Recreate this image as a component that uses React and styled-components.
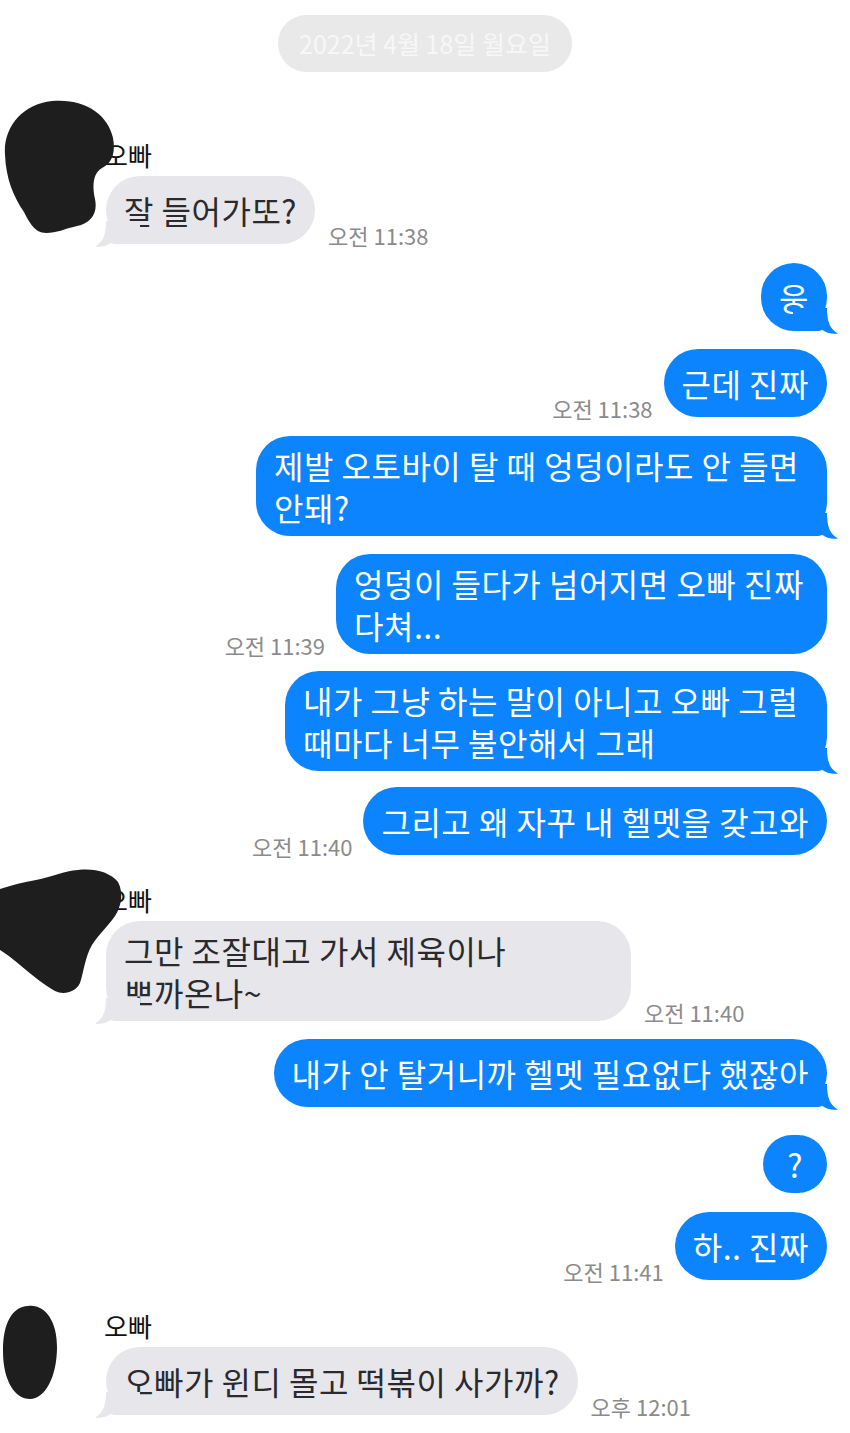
import React from "react";
import styled, { createGlobalStyle } from "styled-components";

const GlobalStyle = createGlobalStyle`
  html, body { margin: 0; padding: 0; background: #ffffff; }
  body { font-family: "Noto Sans CJK KR", "Noto Sans", sans-serif; }
`;

const BLUE = "#0b84fe";
const GRAY = "#e6e6eb";

const Page = styled.div`
  width: 850px;
  min-height: 1433px;
  box-sizing: border-box;
  padding-top: 15px;
  display: flex;
  flex-direction: column;
  background: #ffffff;
  overflow: hidden;
`;

const DatePill = styled.div`
  align-self: center;
  height: 57px;
  padding: 0 21px;
  border-radius: 29px;
  background: #e9e9e9;
  color: #f7f7f7;
  font-size: 25px;
  display: flex;
  align-items: center;
  line-height: 1;
`;

const Group = styled.div`
  position: relative;
  display: flex;
  flex-direction: column;
  margin-top: ${(p) => p.$mt}px;
`;

const Name = styled.div`
  margin-left: 104px;
  margin-bottom: 6px;
  font-size: 26px;
  line-height: 30px;
  color: #111111;
`;

const Blob = styled.svg`
  position: absolute;
  left: 0;
  top: ${(p) => p.$top}px;
  z-index: 2;
  fill: #1e1e1e;
`;

const Row = styled.div`
  display: flex;
  align-items: flex-end;
  justify-content: ${(p) => (p.$out ? "flex-end" : "flex-start")};
  gap: ${(p) => (p.$out ? 11 : 13)}px;
  margin-top: ${(p) => p.$mt}px;
  padding: ${(p) => (p.$out ? "0 23px 0 0" : "0 0 0 106px")};
`;

const Bubble = styled.div`
  position: relative;
  box-sizing: border-box;
  width: ${(p) => (p.$w ? `${p.$w}px` : "auto")};
  min-height: ${(p) => (p.$compact ? 58 : 68)}px;
  padding: ${(p) => (p.$compact ? "0 24px" : "8px 18px")};
  display: flex;
  flex-direction: column;
  justify-content: center;
  border-radius: 34px;
  background: ${(p) => (p.$out ? BLUE : GRAY)};
  color: ${(p) => (p.$out ? "#ffffff" : "#2a2a2e")};
  font-size: 32px;
  letter-spacing: 0.5px;
  line-height: 42px;
  white-space: nowrap;
`;

const Line = styled.span`
  display: block;
  height: 42px;
`;

const Tail = styled.svg`
  position: absolute;
  bottom: -3px;
  width: 46px;
  height: 26px;
  fill: ${(p) => (p.$out ? BLUE : GRAY)};
  ${(p) => (p.$out ? "right: -12px;" : "left: -12px; transform: scaleX(-1);")}
`;

const Time = styled.div`
  font-size: 22px;
  line-height: 22px;
  color: #8b8b8b;
  white-space: nowrap;
  margin-bottom: -2px;
`;

const BLOBS = {
  1: {
    top: -40,
    w: 120,
    h: 135,
    d: "M 5 55 C 3 28, 22 4, 52 1 C 84 -2, 108 14, 113 38 C 116 54, 111 64, 102 68 C 93 73, 92 86, 95 99 C 98 113, 91 123, 77 126 C 64 129, 57 133, 46 133 C 35 133, 29 122, 24 112 C 13 96, 6 78, 5 55 Z",
  },
  2: {
    top: -22,
    w: 124,
    h: 134,
    d: "M 0 26 C 12 22, 24 19, 36 17 C 52 14, 64 8, 78 7 C 94 5, 110 9, 118 19 C 124 30, 121 44, 115 53 C 108 63, 99 71, 92 82 C 85 94, 84 108, 80 120 C 75 130, 63 132, 55 128 C 44 122, 32 112, 20 102 C 12 95, 5 90, 0 87 Z",
  },
  3: {
    top: -8,
    w: 60,
    h: 100,
    d: "M 28 3 C 45 1, 57 18, 57 44 C 57 74, 45 96, 30 96 C 15 96, 3 78, 3 48 C 3 20, 12 4, 28 3 Z",
  },
};

const TAIL_PATH =
  "M0 0 H34 C34 14 37 21 45 25.5 C39 26.3 33 25 29.5 22 C27 23 24 23 20 23 H0 Z";

const items = [
  { kind: "in", blob: 1, mt: 68, lines: ["잘 들어가또?"], time: "오전 11:38" },
  { kind: "out", mt: 19, lines: ["웅"], tail: true },
  { kind: "out", mt: 18, lines: ["근데 진짜"], time: "오전 11:38" },
  { kind: "out", mt: 19, lines: ["제발 오토바이 탈 때 엉덩이라도 안 들면", "안돼?"], tail: true, w: 571 },
  { kind: "out", mt: 18, lines: ["엉덩이 들다가 넘어지면 오빠 진짜", "다쳐..."], time: "오전 11:39", w: 491 },
  { kind: "out", mt: 17, lines: ["내가 그냥 하는 말이 아니고 오빠 그럴", "때마다 너무 불안해서 그래"], tail: true, w: 542 },
  { kind: "out", mt: 16, lines: ["그리고 왜 자꾸 내 헬멧을 갖고와"], time: "오전 11:40" },
  { kind: "in", blob: 2, mt: 30, lines: ["그만 조잘대고 가서 제육이나", "뽀까온나~"], time: "오전 11:40", w: 525 },
  { kind: "out", mt: 18, lines: ["내가 안 탈거니까 헬멧 필요없다 했잖아"], tail: true },
  { kind: "out", mt: 28, lines: ["?"], compact: true },
  { kind: "out", mt: 19, lines: ["하.. 진짜"], time: "오전 11:41" },
  { kind: "in", blob: 3, mt: 31, lines: ["오빠가 윈디 몰고 떡볶이 사가까?"], time: "오후 12:01" },
];

function MessageBubble({ item, out }) {
  return (
    <Bubble $out={out} $w={item.w} $compact={item.compact}>
      {item.lines.map((l, i) => (
        <Line key={i}>{l}</Line>
      ))}
      {(item.tail || !out) && (
        <Tail $out={out} viewBox="0 0 46 26">
          <path d={TAIL_PATH} />
        </Tail>
      )}
    </Bubble>
  );
}

function Incoming({ item }) {
  const b = BLOBS[item.blob];
  return (
    <Group $mt={item.mt}>
      <Blob $top={b.top} width={b.w} height={b.h} viewBox={`0 0 ${b.w} ${b.h}`}>
        <path d={b.d} />
      </Blob>
      <Name>오빠</Name>
      <Row $mt={0}>
        <MessageBubble item={item} out={false} />
        {item.time && <Time>{item.time}</Time>}
      </Row>
    </Group>
  );
}

function Outgoing({ item }) {
  return (
    <Row $out $mt={item.mt}>
      {item.time && <Time>{item.time}</Time>}
      <MessageBubble item={item} out />
    </Row>
  );
}

export default function App() {
  return (
    <>
      <GlobalStyle />
      <Page>
        <DatePill>2022년 4월 18일 월요일</DatePill>
        {items.map((item, i) =>
          item.kind === "in" ? <Incoming key={i} item={item} /> : <Outgoing key={i} item={item} />
        )}
      </Page>
    </>
  );
}
